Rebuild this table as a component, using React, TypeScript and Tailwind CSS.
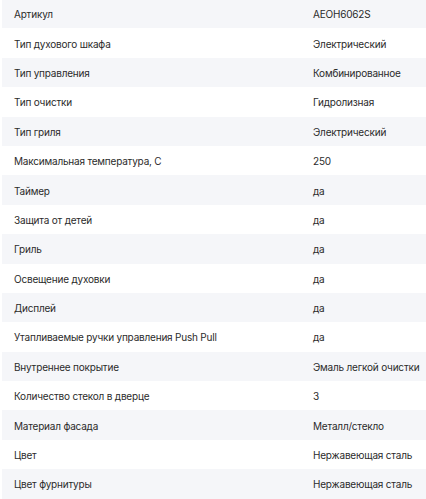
// Таблица характеристик духового шкафа (чередующиеся строки).

const SPECS: [string, string][] = [
  ['Артикул', 'AEOH6062S'],
  ['Тип духового шкафа', 'Электрический'],
  ['Тип управления', 'Комбинированное'],
  ['Тип очистки', 'Гидролизная'],
  ['Тип гриля', 'Электрический'],
  ['Максимальная температура, С', '250'],
  ['Таймер', 'да'],
  ['Защита от детей', 'да'],
  ['Гриль', 'да'],
  ['Освещение духовки', 'да'],
  ['Дисплей', 'да'],
  ['Утапливаемые ручки управления Push Pull', 'да'],
  ['Внутреннее покрытие', 'Эмаль легкой очистки'],
  ['Количество стекол в дверце', '3'],
  ['Материал фасада', 'Металл/стекло'],
  ['Цвет', 'Нержавеющая сталь'],
  ['Цвет фурнитуры', 'Нержавеющая сталь'],
];

export default function App() {
  return (
    <div
      className="h-[499px] w-[426px] overflow-hidden bg-white pl-[2px] text-[10px] tracking-[-0.2px] text-[#2b2b2b]"
      style={{ fontFamily: 'Inter, "Noto Sans", sans-serif' }}
    >
      <div className="-mt-[1px]">
        {SPECS.map(([label, value], i) => (
          <div
            key={label}
            className={
              i % 2 === 0
                ? 'grid h-[29.4px] grid-cols-[311px_1fr] items-center bg-[#f5f6f9] pt-[2px]'
                : 'grid h-[29.4px] grid-cols-[311px_1fr] items-center bg-white pt-[2px]'
            }
          >
            <span className="truncate pl-[12px]">{label}</span>
            <span className="whitespace-nowrap">{value}</span>
          </div>
        ))}
      </div>
    </div>
  );
}
